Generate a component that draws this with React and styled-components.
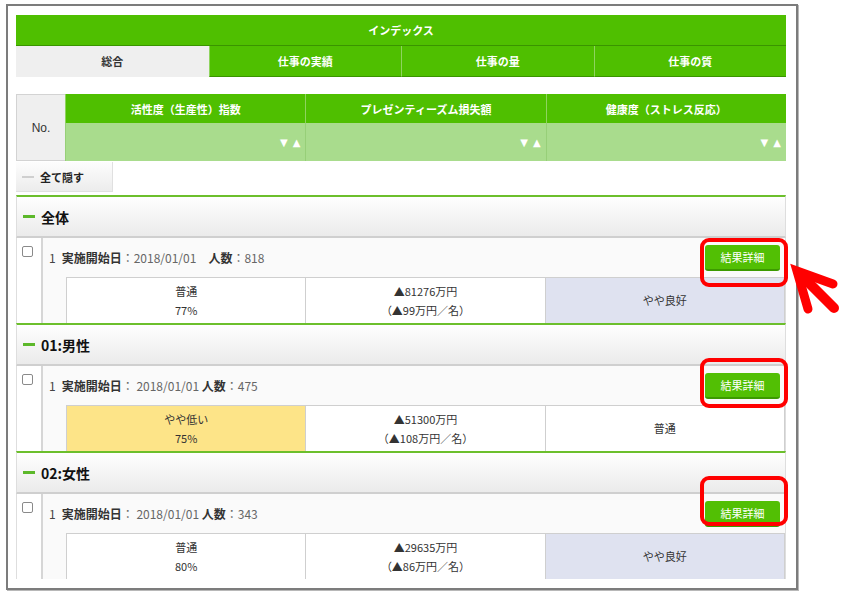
import React from 'react';
import styled, { createGlobalStyle } from 'styled-components';

const GREEN = '#4fbf00';
const GREEN_DARK = '#3a9400';
const GREEN_LIGHT = '#a9dc8d';

const GlobalStyle = createGlobalStyle`
  html, body { margin: 0; padding: 0; background: #fff; }
  body { font-family: "Noto Sans CJK JP", "Noto Sans", sans-serif; color: #333; }
  * { box-sizing: border-box; }
`;

const Page = styled.div`
  position: relative;
  width: 841px;
  height: 597px;
  padding: 4px 0 0 6px;
`;

const Frame = styled.div`
  width: 792px;
  height: 586px;
  border: 2px solid #7c7c7c;
  box-shadow: 1px 1px 0 #b8b8b8;
  padding: 9px 10px 0 8px;
  display: flex;
  flex-direction: column;
  background: #fff;
`;

const TitleBar = styled.div`
  height: 31px;
  background: ${GREEN};
  border-bottom: 1px solid ${GREEN_DARK};
  color: #fff;
  font-size: 11px;
  font-weight: 700;
  display: flex;
  align-items: center;
  justify-content: center;
`;

const Tabs = styled.div`
  display: grid;
  grid-template-columns: repeat(4, 1fr);
  height: 31px;
`;

const Tab = styled.div`
  display: flex;
  align-items: center;
  justify-content: center;
  font-size: 11px;
  font-weight: 700;
  color: ${p => (p.$active ? '#333' : '#fff')};
  background: ${p => (p.$active ? '#efefef' : GREEN)};
  border-bottom: 1px solid ${p => (p.$active ? '#efefef' : GREEN_DARK)};
  border-left: ${p => (p.$first || p.$active ? 'none' : '1px solid #8fd35f')};
`;

const IndexTable = styled.div`
  margin-top: 17px;
  display: grid;
  grid-template-columns: 49px 1fr 1fr 1fr;
  grid-template-rows: 29px 38px;
`;

const NoCell = styled.div`
  grid-row: 1 / span 2;
  background: #efefef;
  border: 1px solid #d3d3d3;
  border-right: none;
  display: flex;
  align-items: center;
  justify-content: center;
  font-size: 12px;
  color: #333;
  font-family: "Liberation Sans", "Noto Sans CJK JP", sans-serif;
`;

const HeadCell = styled.div`
  background: ${GREEN};
  color: #fff;
  font-size: 11px;
  font-weight: 700;
  display: flex;
  align-items: center;
  justify-content: center;
  border-left: 1px solid #8fd35f;
`;

const SortCell = styled.div`
  background: ${GREEN_LIGHT};
  border-left: 1px solid #97cf78;
  display: flex;
  align-items: center;
  justify-content: flex-end;
  gap: 5px;
  padding-right: 5px;
  color: #fff;
  font-size: 10px;
  font-family: "DejaVu Sans", sans-serif;
`;

const HideAll = styled.div`
  width: 97px;
  height: 30px;
  margin-top: 1px;
  background: linear-gradient(#fdfdfd, #ececec);
  border-right: 1px solid #e0e0e0;
  border-bottom: 1px solid #e0e0e0;
  display: flex;
  align-items: center;
  padding-left: 6px;
  font-size: 11px;
  font-weight: 700;
  color: #222;
`;

const Dash = styled.span`
  display: inline-block;
  width: ${p => p.$w || 12}px;
  height: ${p => p.$h || 2}px;
  background: ${p => p.$color};
  margin-right: 6px;
`;

const Section = styled.section`
  margin-top: ${p => (p.$first ? 3 : 0)}px;
`;

const SectionHeader = styled.div`
  height: 43px;
  border-top: 2px solid #6cbf2c;
  border-bottom: 2px solid #cfcfcf;
  border-left: 1px solid #dedede;
  border-right: 1px solid #dedede;
  background: linear-gradient(#fefefe, #ebebeb);
  display: flex;
  align-items: center;
  padding-left: 6px;
  font-size: 14px;
  font-weight: 700;
  color: #111;
`;

const Row = styled.div`
  position: relative;
  display: grid;
  grid-template-columns: 26px 1fr;
  height: 85px;
  border-left: 1px solid #dedede;
  border-right: 1px solid #dedede;
`;

const CheckCell = styled.div`
  border-right: 2px solid #d6d6d6;
  background: #fff;
  padding: 8px 0 0 5px;
`;

const Check = styled.span`
  display: block;
  width: 11px;
  height: 11px;
  border: 1px solid #8a8a8a;
  border-radius: 2px;
  background: #fff;
`;

const Content = styled.div`
  background: #fafafa;
  display: flex;
  flex-direction: column;
`;

const InfoLine = styled.div`
  height: 39px;
  display: flex;
  align-items: center;
  padding: 0 5px 0 6px;
  font-size: 12px;
  color: #666;
`;

const Num = styled.span`
  color: #444;
  margin-right: 6px;
`;

const Label = styled.span`
  color: #333;
  font-weight: 700;
`;

const Info = styled.span`
  flex: 1;
  white-space: pre;
`;

const DetailButton = styled.button`
  width: 75px;
  height: 26px;
  border: none;
  border-bottom: 2px solid #3c9a00;
  border-radius: 3px;
  background: #52bf04;
  color: #fff;
  font-family: inherit;
  font-size: 11px;
  padding: 0;
`;

const DataTable = styled.div`
  margin-left: 23px;
  display: grid;
  grid-template-columns: repeat(3, 1fr);
  height: 46px;
  border-top: 1px solid #cfcfcf;
  border-left: 1px solid #cfcfcf;
`;

const DataCell = styled.div`
  background: ${p => p.$bg || '#fff'};
  border-right: 1px solid #cfcfcf;
  display: flex;
  flex-direction: column;
  align-items: center;
  justify-content: center;
  font-size: 11px;
  line-height: 19px;
  color: #333;
`;

const Highlight = styled.div`
  position: absolute;
  right: -3px;
  width: 88px;
  top: ${p => p.$top}px;
  height: ${p => p.$h}px;
  border: 4px solid #ff0000;
  border-radius: 9px;
  pointer-events: none;
`;

const ArrowWrap = styled.svg`
  position: absolute;
  left: 790px;
  top: 262px;
`;

const sections = [
  {
    title: '全体',
    info: ['：2018/01/01　', '：818'],
    cells: [
      { lines: ['普通', '77%'] },
      { lines: ['▲81276万円', '（▲99万円／名）'] },
      { lines: ['やや良好'], bg: '#dfe2f0' },
    ],
    box: { top: 0, h: 49 },
  },
  {
    title: '01:男性',
    info: ['： 2018/01/01 ', '：475'],
    cells: [
      { lines: ['やや低い', '75%'], bg: '#fde488' },
      { lines: ['▲51300万円', '（▲108万円／名）'] },
      { lines: ['普通'] },
    ],
    box: { top: -8, h: 50 },
  },
  {
    title: '02:女性',
    info: ['： 2018/01/01 ', '：343'],
    cells: [
      { lines: ['普通', '80%'] },
      { lines: ['▲29635万円', '（▲86万円／名）'] },
      { lines: ['やや良好'], bg: '#dfe2f0' },
    ],
    box: { top: -18, h: 50 },
  },
];

export default function App() {
  return (
    <Page>
      <GlobalStyle />
      <Frame>
        <TitleBar>インデックス</TitleBar>
        <Tabs>
          <Tab $active $first>総合</Tab>
          <Tab>仕事の実績</Tab>
          <Tab>仕事の量</Tab>
          <Tab>仕事の質</Tab>
        </Tabs>
        <IndexTable>
          <NoCell>No.</NoCell>
          <HeadCell>活性度（生産性）指数</HeadCell>
          <HeadCell>プレゼンティーズム損失額</HeadCell>
          <HeadCell>健康度（ストレス反応）</HeadCell>
          {[0, 1, 2].map(k => (
            <SortCell key={k}>
              <span>▼</span>
              <span>▲</span>
            </SortCell>
          ))}
        </IndexTable>
        <HideAll>
          <Dash $color="#cfcfcf" $w={12} $h={2} />
          全て隠す
        </HideAll>
        {sections.map((s, i) => (
          <Section key={s.title} $first={i === 0}>
            <SectionHeader>
              <Dash $color="#5cb82a" $w={12} $h={3} />
              {s.title}
            </SectionHeader>
            <Row>
              <CheckCell>
                <Check />
              </CheckCell>
              <Content>
                <InfoLine>
                  <Num>1</Num>
                  <Info>
                    <Label>実施開始日</Label>
                    {s.info[0]}
                    <Label>人数</Label>
                    {s.info[1]}
                  </Info>
                  <DetailButton>結果詳細</DetailButton>
                </InfoLine>
                <DataTable>
                  {s.cells.map((c, j) => (
                    <DataCell key={j} $bg={c.bg}>
                      {c.lines.map(l => (
                        <span key={l}>{l}</span>
                      ))}
                    </DataCell>
                  ))}
                </DataTable>
              </Content>
              <Highlight $top={s.box.top} $h={s.box.h} />
            </Row>
          </Section>
        ))}
      </Frame>
      <ArrowWrap width="51" height="54" viewBox="0 0 51 54">
        <path d="M43 22 L7 9 L18 47" fill="none" stroke="#ff0000" strokeWidth="9" strokeLinejoin="miter" strokeLinecap="round" />
        <path d="M11 13 L44 46" fill="none" stroke="#ff0000" strokeWidth="10" strokeLinecap="round" />
      </ArrowWrap>
    </Page>
  );
}
